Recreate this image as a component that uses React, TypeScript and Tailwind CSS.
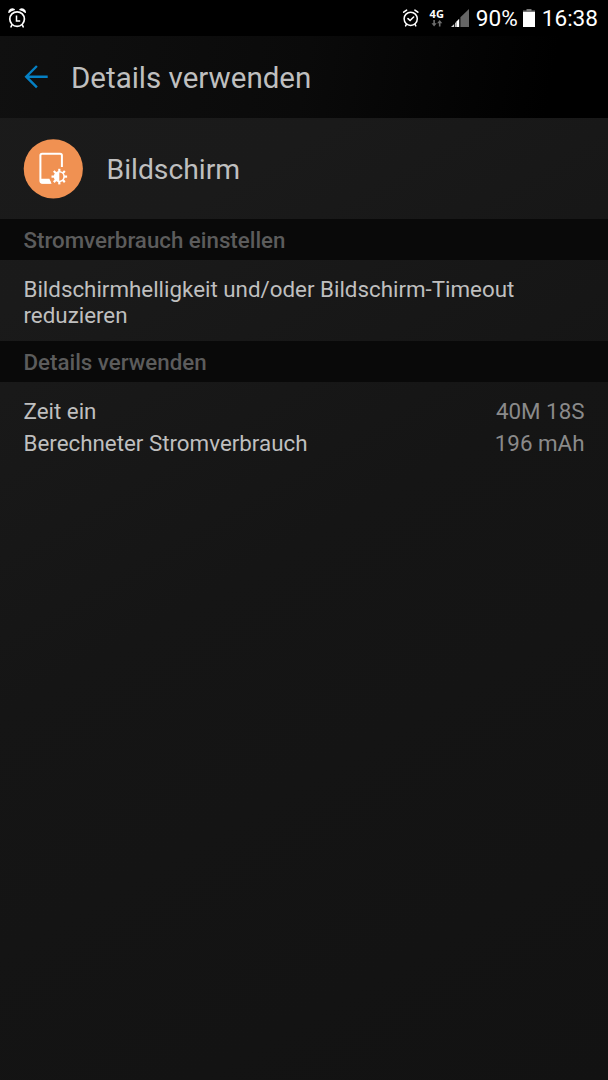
import React from 'react'

interface UsageRow {
  label: string
  value: string
}

const usageRows: UsageRow[] = [
  { label: 'Zeit ein', value: '40M 18S' },
  { label: 'Berechneter Stromverbrauch', value: '196 mAh' },
]

const gearAngles = [0, 45, 90, 135, 180, 225, 270, 315]

function AlarmIcon() {
  return (
    <svg width="20" height="20" viewBox="0 0 20 20" fill="none" stroke="#fff" strokeLinecap="round">
      <circle cx="10.1" cy="11.1" r="7.3" strokeWidth="1.7" />
      <path
        d="M1.9 4.2C2 1.6 5 0 7.2 1.6Q4 2.4 1.9 4.2ZM18.3 4.2C18.2 1.6 15.2 0 13 1.6Q16.2 2.4 18.3 4.2Z"
        fill="#fff"
        strokeWidth="1.4"
        strokeLinejoin="round"
      />
      <path d="M9.5 7.6V12.9H13.2" strokeWidth="1.5" strokeLinecap="butt" />
      <path d="M4.8 17.2L4 18.9M15.4 17.2L16.2 18.9" strokeWidth="1.6" />
    </svg>
  )
}

function AlarmCheckIcon() {
  return (
    <svg width="18" height="20" viewBox="0 0 18 20" fill="none" stroke="#fff" strokeLinecap="round">
      <circle cx="8.7" cy="10.8" r="6.6" strokeWidth="1.5" />
      <path d="M1.7 4.2L4.6 2.1M15.8 4.2L12.9 2.1" strokeWidth="1.6" />
      <path d="M6 10.6L8.1 12.5L11.6 9" strokeWidth="1.6" />
      <path d="M4.4 16.4L3.6 17.9M13 16.4L13.8 17.9" strokeWidth="1.5" />
    </svg>
  )
}

function NetworkIcon() {
  return (
    <div className="flex flex-col items-center w-[16px]">
      <span className="font-['Open_Sans',sans-serif] text-[11px] leading-[9px] font-bold">4G</span>
      <svg className="mt-[2px]" width="12" height="7" viewBox="0 0 12 7" fill="#6e6e6e">
        <path d="M2.3 0H3.9V3.2H5.7L3.1 6.4L0.5 3.2H2.3Z" />
        <path d="M7.9 6.4H9.5V3.2H11.3L8.7 0L6.1 3.2H7.9Z" />
      </svg>
    </div>
  )
}

function SignalIcon() {
  return (
    <svg width="18" height="18" viewBox="0 0 18 18">
      <path d="M9.4 8.2L18 0V18H9.4Z" fill="#666" />
      <path d="M0 18L3.2 14.9V18ZM4 18V14.1L4.9 13.2V18Z" fill="#ccc" />
      <path d="M5.3 18V12.8L8.2 9.8V18Z" fill="#fff" />
    </svg>
  )
}

function BatteryIcon() {
  return (
    <svg width="12" height="18" viewBox="0 0 12 18">
      <path d="M3.5 0H8.5V1.6H12V3.4H0V1.6H3.5Z" fill="#777" />
      <path d="M0 3H12V18H0Z" fill="#fff" />
    </svg>
  )
}

function ScreenIcon() {
  return (
    <svg className="mt-px overflow-visible" width="60" height="60" viewBox="0 0 60 60">
      <circle cx="29.3" cy="29.8" r="29.6" fill="#f09152" />
      <path
        d="M37.9 28V16.6C37.9 15.4 37.3 14.8 36.1 14.8H18.2C17 14.8 16.4 15.4 16.4 16.6V41.4C16.4 42.8 17 43.6 18.4 43.6H26.5"
        fill="none"
        stroke="#fff"
        strokeWidth="2"
      />
      <path d="M16.4 39.8H25.4L27.6 44.7H18.4C16.8 44.7 16.4 43.4 16.4 42.4Z" fill="#fff" />
      {/* Brightness gear */}
      {gearAngles.map((angle) => (
        <rect key={angle} x="34.2" y="29.8" width="2.2" height="4" fill="#fff" transform={`rotate(${angle} 35.3 37.6)`} />
      ))}
      <circle cx="35.3" cy="37.6" r="4.8" fill="#f09152" stroke="#fff" strokeWidth="1.5" />
      <path d="M35.3 32.7A4.9 4.9 0 0 0 35.3 42.5Z" fill="#fff" />
    </svg>
  )
}

function SectionHeader({ title }: { title: string }) {
  return (
    <h2 className="h-[41px] px-[23.5px] bg-[#090909] text-[#5c5c5c] text-[22.3px] leading-[43px] font-medium">
      {title}
    </h2>
  )
}

export default function App() {
  return (
    <div className="w-[608px] h-[1080px] overflow-hidden flex flex-col font-[Roboto,sans-serif] text-[#bfbfbf] bg-[linear-gradient(150deg,#1b1b1b_0%,#1a1a1a_22%,#151515_50%,#121212_100%)]">
      {/* Status bar */}
      <div className="h-[36px] shrink-0 flex items-center bg-black text-white pl-[7px] pr-[10px]">
        <AlarmIcon />
        <div className="ml-auto flex items-center text-[22.6px] leading-[36px]">
          <AlarmCheckIcon />
          <div className="ml-[9px]">
            <NetworkIcon />
          </div>
          <div className="ml-[6px]">
            <SignalIcon />
          </div>
          <span className="ml-[7px] pt-[2px] w-[42px] whitespace-nowrap">90%</span>
          <div className="ml-[5px]">
            <BatteryIcon />
          </div>
          <span className="ml-[7px] pt-[2px] whitespace-nowrap">16:38</span>
        </div>
      </div>

      {/* Title bar */}
      <header className="h-[82px] shrink-0 flex items-center px-[23.5px] bg-[linear-gradient(100deg,#101010_0%,#0a0a0a_50%,#000_90%)]">
        <svg width="24" height="24" viewBox="0 0 24 24" fill="none" stroke="#0580c4" strokeWidth="2.4">
          <path d="M12.9 1L2.2 11.7L12.9 22.4M2.4 11.7H23.7" />
        </svg>
        <h1 className="ml-[23.5px] pt-[2px] text-[29.5px] leading-[40px]">Details verwenden</h1>
      </header>

      <div className="h-[101px] shrink-0 flex items-center px-[24px]">
        <ScreenIcon />
        <span className="ml-[22.5px] pt-[3px] text-[28.3px] leading-[40px]">Bildschirm</span>
      </div>

      <SectionHeader title="Stromverbrauch einstellen" />
      <p className="h-[81px] px-[23.5px] pt-[16px] text-[22.35px] leading-[26px]">
        Bildschirmhelligkeit und/oder Bildschirm-Timeout reduzieren
      </p>

      <SectionHeader title="Details verwenden" />
      <div className="px-[23.5px] pt-[13px]">
        {usageRows.map((row) => (
          <div key={row.label} className="flex justify-between text-[22.35px] leading-[32px]">
            <span>{row.label}</span>
            <span className="text-[#8a8a8a]">{row.value}</span>
          </div>
        ))}
      </div>
    </div>
  )
}
